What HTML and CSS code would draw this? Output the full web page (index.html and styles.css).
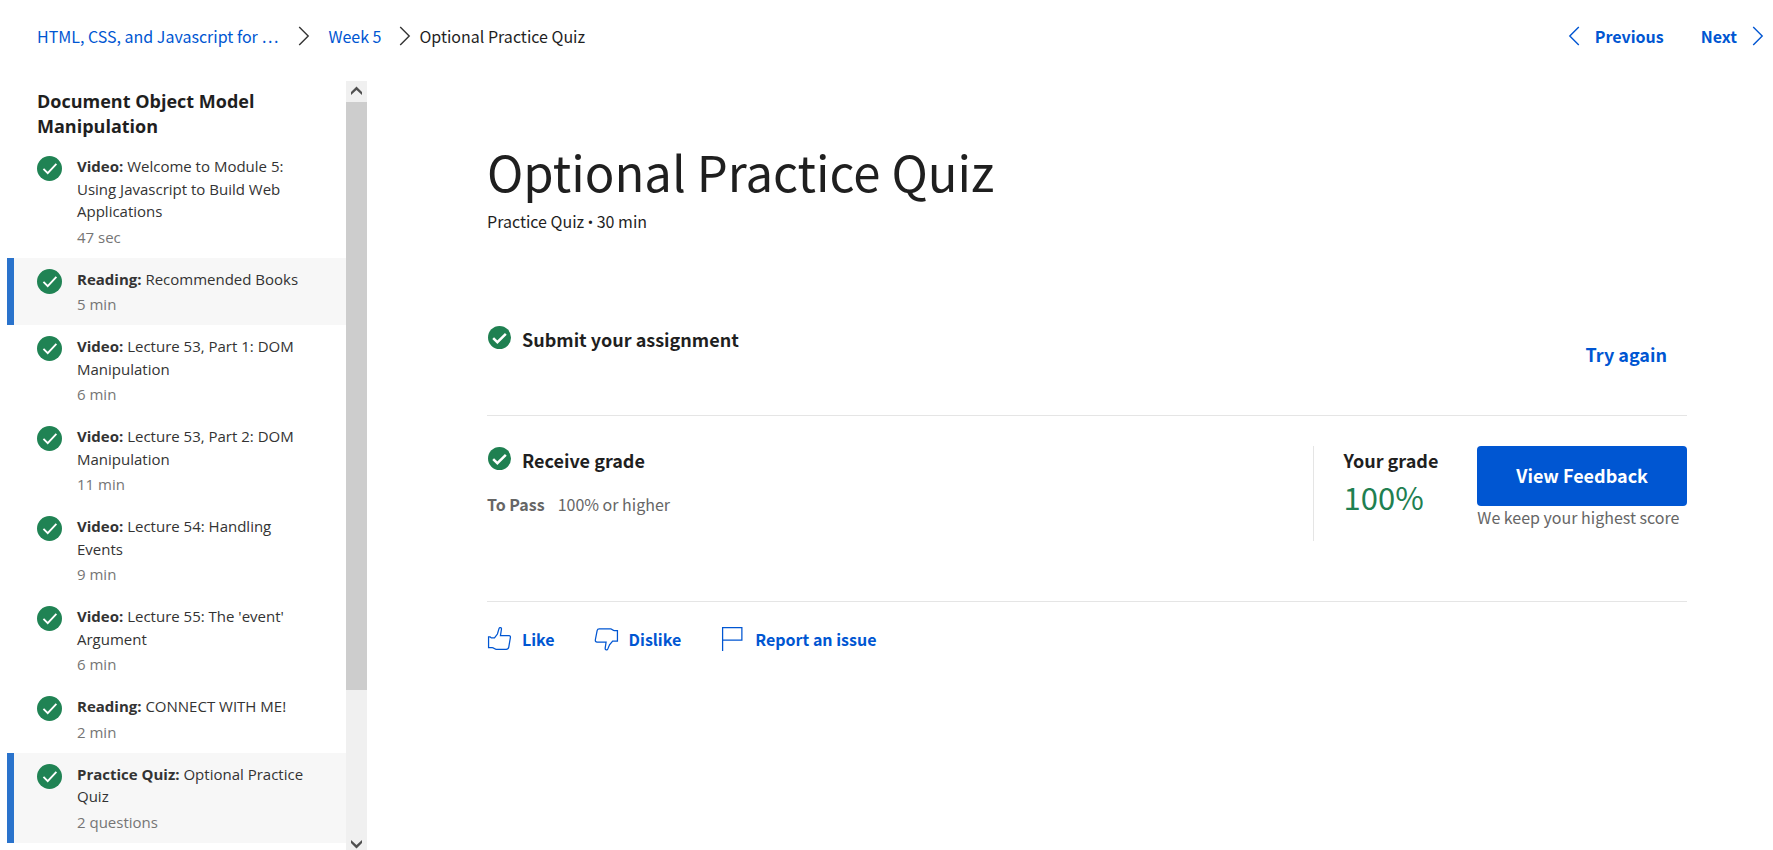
FILE: index.html
```html
<!DOCTYPE html>
<html lang="en">
<head>
<meta charset="utf-8">
<title>Optional Practice Quiz</title>
<link rel="stylesheet" href="styles.css">
</head>
<body>
<svg class="defs" aria-hidden="true">
  <symbol id="done-thin" viewBox="0 0 24 24"><circle cx="12" cy="12" r="12" fill="#208354"/><path d="M6.2 12.4l4.1 4.1 8.3-8.9" fill="none" stroke="#fff" stroke-width="1.8"/></symbol>
  <symbol id="done" viewBox="0 0 24 24"><circle cx="12" cy="12" r="12" fill="#1f8051"/><path d="M5.4 12.6l4.4 4.3 8.8-8.7" fill="none" stroke="#fff" stroke-width="2.6"/></symbol>
  <symbol id="chevron-right" viewBox="0 0 12 20"><path d="M1.2 1l9 9-9 9" fill="none" stroke="currentColor" stroke-width="1.4"/></symbol>
  <symbol id="chevron-left" viewBox="0 0 12 20"><path d="M10.8 1l-9 9 9 9" fill="none" stroke="currentColor" stroke-width="1.4"/></symbol>
</svg>
<div class="page">
  <header class="topbar">
    <nav class="crumbs" aria-label="Breadcrumb">
      <a href="#">HTML, CSS, and Javascript for …</a>
      <svg class="chevron crumb-gap"><use href="#chevron-right"/></svg>
      <a href="#">Week 5</a>
      <svg class="chevron crumb-last"><use href="#chevron-right"/></svg>
      <span>Optional Practice Quiz</span>
    </nav>
    <nav class="pager" aria-label="Items">
      <a href="#"><svg class="chevron"><use href="#chevron-left"/></svg>Previous</a>
      <a href="#">Next<svg class="chevron"><use href="#chevron-right"/></svg></a>
    </nav>
  </header>
  <div class="body">
    <aside class="sidebar">
      <div class="lessons">
        <h2>Document Object Model Manipulation</h2>
        <ul>
          <li><a href="#"><svg class="tick"><use href="#done-thin"/></svg><span><strong>Video:</strong> Welcome to Module 5: Using Javascript to Build Web Applications<small>47 sec</small></span></a></li>
          <li class="marked"><a href="#"><svg class="tick"><use href="#done-thin"/></svg><span><strong>Reading:</strong> Recommended Books<small>5 min</small></span></a></li>
          <li><a href="#"><svg class="tick"><use href="#done-thin"/></svg><span><strong>Video:</strong> Lecture 53, Part 1: DOM Manipulation<small>6 min</small></span></a></li>
          <li><a href="#"><svg class="tick"><use href="#done-thin"/></svg><span><strong>Video:</strong> Lecture 53, Part 2: DOM Manipulation<small>11 min</small></span></a></li>
          <li><a href="#"><svg class="tick"><use href="#done-thin"/></svg><span><strong>Video:</strong> Lecture 54: Handling Events<small>9 min</small></span></a></li>
          <li><a href="#"><svg class="tick"><use href="#done-thin"/></svg><span><strong>Video:</strong> Lecture 55: The 'event' Argument<small>6 min</small></span></a></li>
          <li><a href="#"><svg class="tick"><use href="#done-thin"/></svg><span><strong>Reading:</strong> CONNECT WITH ME!<small>2 min</small></span></a></li>
          <li class="marked"><a href="#"><svg class="tick"><use href="#done-thin"/></svg><span><strong>Practice Quiz:</strong> Optional Practice Quiz<small>2 questions</small></span></a></li>
        </ul>
      </div>
      <div class="scrollbar" aria-hidden="true">
        <svg class="arrow" viewBox="0 0 21 21"><path d="M5 14v-3l5.500-5.500L16 11v3l-5.500-5z" fill="#505050"/></svg>
        <div class="track"><div class="thumb"></div></div>
        <svg class="arrow arrow-down" viewBox="0 4 21 13"><path d="M5 7v3l5.500 5.500L16 10V7l-5.500 5z" fill="#505050"/></svg>
      </div>
    </aside>
    <main class="content">
      <h1>Optional Practice Quiz</h1>
      <p class="subtitle">Practice Quiz <span class="dot">•</span> 30 min</p>
      <section class="step step-submit">
        <h3><svg class="step-tick"><use href="#done"/></svg><span>Submit your assignment</span></h3>
        <button class="btn btn-text" type="button">Try again</button>
      </section>
      <section class="step step-grade">
        <div class="step-main">
          <h3><svg class="step-tick"><use href="#done"/></svg><span>Receive grade</span></h3>
          <p class="to-pass"><strong>To Pass</strong><span>100% or higher</span></p>
        </div>
        <div class="grade">
          <h4>Your grade</h4>
          <p>100%</p>
        </div>
        <div class="feedback">
          <button class="btn btn-primary" type="button">View Feedback</button>
          <p>We keep your highest score</p>
        </div>
      </section>
      <div class="actions">
        <button type="button"><svg viewBox="0 0 24 24"><path d="M1.500 10.500h1.500l1.200 1h3l2.800-3.800 1.600-5.400c.4-1.200 2.500-.9 2.300.6l-1 6.300h8.200c1.200 0 1.600.9 1.300 2.200l-1.500 8.800c-.3 1.500-1.300 2.200-2.500 2.200H9c-1.500 0-2.500-1.700-4-1.700H1.500z"/></svg>Like</button>
        <button type="button"><svg viewBox="0 0 24 24"><path d="M22.500 14.500h-4.600l-3 3.500-1.700 4.200c-.5 1.300-2.700.9-2.500-.8l.9-5.900H3c-1.500 0-1.900-1-1.700-2.300L3 4.400c.2-1.100.9-1.700 2-1.700h11c1.200 0 2.200 1.700 3.500 1.700h3z"/></svg>Dislike</button>
        <button type="button"><svg viewBox="0 0 24 24"><path d="M2.500 24V1.500h18.500v12H2.500"/></svg>Report an issue</button>
      </div>
    </main>
  </div>
</div>
</body>
</html>
```
FILE: styles.css
```css
* { box-sizing: border-box; }
body, h1, h2, h3, h4, p, ul { margin: 0; padding: 0; }
body {
  background: #fff;
  color: #1f1f1f;
  font: 16px/24px "Noto Sans CJK SC", sans-serif;
}
a { color: #0056d2; text-decoration: none; }
button { font: inherit; border: 0; background: none; color: #0056d2; padding: 0; cursor: pointer; }
.defs { display: none; }
.page { display: flex; flex-direction: column; height: 100vh; overflow: hidden; }

.topbar {
  display: flex;
  justify-content: space-between;
  align-items: center;
  flex: none;
  height: 71px;
  margin-bottom: 10px;
  padding: 0 9px 0 37px;
}
.crumbs, .pager, .pager a { display: flex; align-items: center; }
.chevron { width: 12px; height: 20px; flex: none; }
.crumb-gap { margin: 0 18px 0 20px; color: #333; }
.crumb-last { margin: 0 8px 0 18px; color: #333; }
.pager { gap: 37px; font-weight: 700; }
.pager a { gap: 15px; }

.body { display: flex; flex: 1; min-height: 0; }
.sidebar {
  display: flex;
  flex: none;
  width: 367px;
  padding-left: 7px;
  font-family: "Open Sans", sans-serif;
}
.lessons { flex: 1; overflow: hidden; }
.lessons h2 { padding: 8px 30px 6px; font-size: 18px; line-height: 25px; }
.lessons ul { list-style: none; }
.lessons li { border-left: 7px solid transparent; }
.lessons .marked { border-color: #2a73cc; background: #f7f7f7; }
.lessons li a {
  display: flex;
  gap: 15px;
  padding: 10px 30px 9px 23px;
  color: #333;
  font-size: 15px;
  line-height: 1.5;
}
.lessons small { display: block; margin-top: 3px; font-size: 15px; line-height: 23px; color: #757575; }
.tick { flex: none; width: 25px; height: 25px; margin-top: 1px; }

.scrollbar { display: flex; flex-direction: column; width: 21px; background: #f0f0f0; }
.arrow { width: 21px; height: 21px; flex: none; }
.arrow-down { height: 13px; }
.track { flex: 1; }
.thumb { height: 80%; background: #cdcdcd; }

.content { flex: 1; max-width: 1406px; padding: 54px 86px 0 120px; }
h1 { font-size: 49px; line-height: 72px; font-weight: 400; }
.subtitle { line-height: 28px; }
.dot { font-family: Roboto, sans-serif; }
.step { display: flex; align-items: flex-start; border-bottom: 1px solid #e5e5e5; }
.step h3 { display: flex; gap: 11px; padding-left: 1px; font-size: 18px; line-height: 28px; }
.step-tick { width: 23px; height: 23px; margin-top: 1px; flex: none; }
.btn { height: 60px; padding-bottom: 2px; font-size: 18px; font-weight: 700; border-radius: 4px; }
.btn-text { padding-left: 20px; padding-right: 20px; }
.btn-primary { padding-left: 39px; padding-right: 39px; background: #0056d2; color: #fff; }
.step-submit { justify-content: space-between; margin-top: 88px; padding-bottom: 30px; }
.step-grade { padding: 30px 0 60px; }
.step-main { flex: 1; }
.to-pass { display: flex; gap: 13px; margin-top: 18px; color: #666; }
.grade { height: 95px; padding: 0 39px 0 30px; border-left: 1px solid #e5e5e5; }
.grade h4 { font-size: 18px; line-height: 28px; }
.grade p { font-size: 31px; line-height: 46px; color: #1f8051; }
.feedback p { line-height: 22px; color: #666; }
.actions { display: flex; gap: 39px; padding-top: 24px; }
.actions button { display: flex; align-items: center; gap: 10px; font-weight: 700; }
.actions svg { width: 25px; height: 25px; fill: none; stroke: #0056d2; stroke-width: 1.2; }
```
